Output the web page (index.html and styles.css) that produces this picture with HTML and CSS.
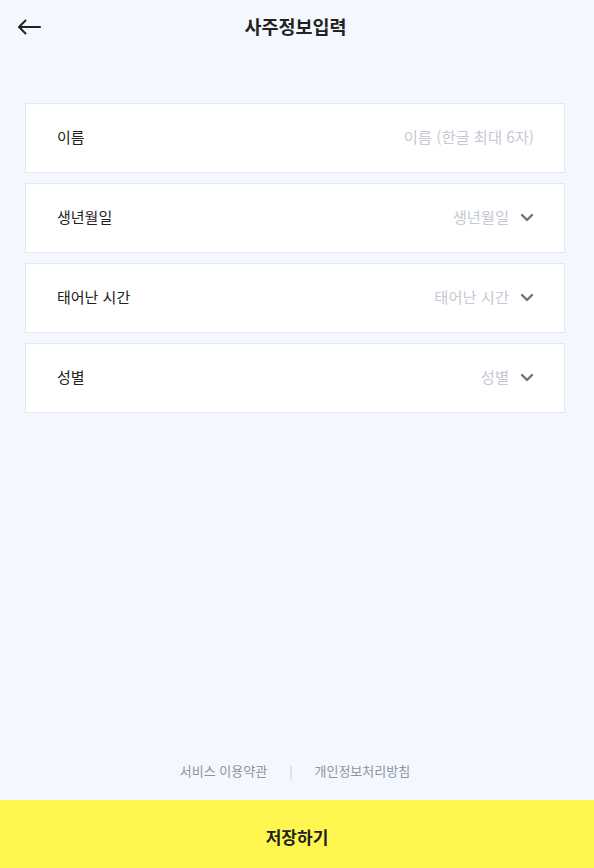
FILE: index.html
```html
<!DOCTYPE html>
<html lang="ko">
<head>
<meta charset="utf-8">
<title>사주정보입력</title>
<link rel="stylesheet" href="styles.css">
</head>
<body>
<div class="page">
  <header class="header">
    <button class="back" aria-label="뒤로">
      <svg width="24" height="16" viewBox="0 0 24 16"><path d="M23 8H2M8.5 1.5L2 8l6.5 6.5" fill="none" stroke="#222" stroke-width="2" stroke-linecap="round" stroke-linejoin="round"/></svg>
    </button>
    <h1 class="title">사주정보입력</h1>
  </header>
  <main class="form">
    <div class="field">
      <span class="label">이름</span>
      <span class="value">이름 (한글 최대 6자)</span>
    </div>
    <div class="field">
      <span class="label">생년월일</span>
      <span class="value">생년월일<svg class="chev" width="14" height="9" viewBox="0 0 14 9"><path d="M2 2l5 5 5-5" fill="none" stroke="#6b7684" stroke-width="2.4" stroke-linecap="round" stroke-linejoin="round"/></svg></span>
    </div>
    <div class="field">
      <span class="label">태어난 시간</span>
      <span class="value">태어난 시간<svg class="chev" width="14" height="9" viewBox="0 0 14 9"><path d="M2 2l5 5 5-5" fill="none" stroke="#6b7684" stroke-width="2.4" stroke-linecap="round" stroke-linejoin="round"/></svg></span>
    </div>
    <div class="field">
      <span class="label">성별</span>
      <span class="value">성별<svg class="chev" width="14" height="9" viewBox="0 0 14 9"><path d="M2 2l5 5 5-5" fill="none" stroke="#6b7684" stroke-width="2.4" stroke-linecap="round" stroke-linejoin="round"/></svg></span>
    </div>
  </main>
  <footer class="footer">
    <nav class="links">
      <a class="link">서비스 이용약관</a>
      <span class="sep">|</span>
      <a class="link">개인정보처리방침</a>
    </nav>
    <button class="save">저장하기</button>
  </footer>
</div>
</body>
</html>
```
FILE: styles.css
```css
* { box-sizing: border-box; }
html, body { margin: 0; padding: 0; }
body {
  background: #f4f7fe;
  font-family: "Noto Sans CJK KR", "Noto Sans", sans-serif;
  color: #222;
}
.page {
  width: 594px;
  height: 868px;
  display: flex;
  flex-direction: column;
}
.header {
  height: 56px;
  display: flex;
  align-items: center;
  justify-content: center;
  position: relative;
  padding-bottom: 4px;
}
.back {
  position: absolute;
  left: 17px;
  top: 19px;
  border: 0;
  background: none;
  padding: 0;
  width: 24px;
  height: 16px;
  display: flex;
}
.title {
  margin: 0;
  font-size: 18.5px;
  font-weight: 700;
  color: #222;
  padding-right: 3px;
}
.form {
  padding: 47px 29px 0 25px;
  display: flex;
  flex-direction: column;
  gap: 10px;
  flex: 1;
}
.field {
  height: 70px;
  background: #fff;
  border: 1px solid #e3e7ef;
  display: flex;
  align-items: center;
  justify-content: space-between;
  padding: 0 30px 4px 31px;
}
.label {
  font-size: 15px;
  color: #222;
}
.value {
  font-size: 15.3px;
  color: #c4c9d3;
  display: flex;
  align-items: center;
  gap: 11px;
}
.chev { display: block; margin-top: 2px; }
.footer {
  display: flex;
  flex-direction: column;
}
.links {
  display: flex;
  justify-content: center;
  align-items: center;
  gap: 22px;
  height: 30px;
  margin-bottom: 14px;
  padding: 0 4px 2px 0;
}
.link {
  font-size: 13px;
  color: #8b95a1;
}
.sep {
  font-size: 12px;
  color: #c4c9d3;
}
.save {
  height: 68px;
  border: 0;
  background: #fff650;
  font-family: inherit;
  font-size: 17px;
  font-weight: 700;
  color: #222;
  padding: 5px 0 0;
}
```
